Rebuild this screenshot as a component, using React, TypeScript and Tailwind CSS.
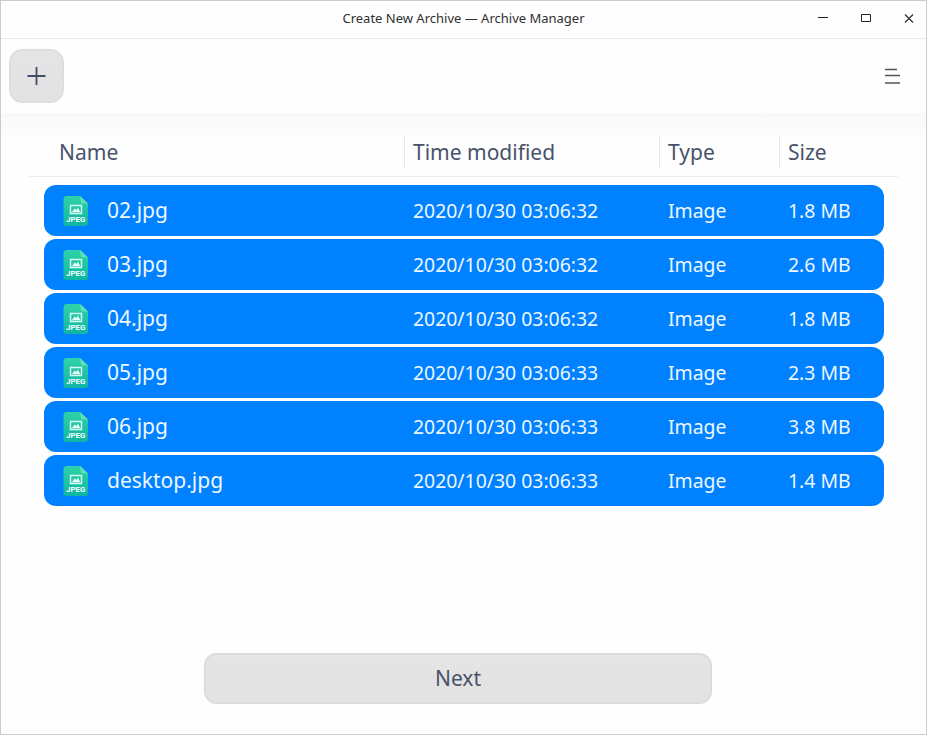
const files = [
  { name: "02.jpg", time: "2020/10/30 03:06:32", type: "Image", size: "1.8 MB" },
  { name: "03.jpg", time: "2020/10/30 03:06:32", type: "Image", size: "2.6 MB" },
  { name: "04.jpg", time: "2020/10/30 03:06:32", type: "Image", size: "1.8 MB" },
  { name: "05.jpg", time: "2020/10/30 03:06:33", type: "Image", size: "2.3 MB" },
  { name: "06.jpg", time: "2020/10/30 03:06:33", type: "Image", size: "3.8 MB" },
  { name: "desktop.jpg", time: "2020/10/30 03:06:33", type: "Image", size: "1.4 MB" },
];

function JpegIcon() {
  return (
    <svg width="26" height="32" viewBox="0 0 26 32" className="shrink-0">
      <defs>
        <linearGradient id="sheet" x1="0" y1="0" x2="0" y2="1">
          <stop offset="0" stopColor="#2fd3a8" />
          <stop offset="1" stopColor="#0fb5a3" />
        </linearGradient>
      </defs>
      <path d="M4 1H17l8 7.500V28a3 3 0 0 1-3 3H3.500a3 3 0 0 1-3-3V4.500A3.500 3.500 0 0 1 4 1z" fill="url(#sheet)" />
      <path d="M17 1l8 7.500H20a2 2 0 0 1-2-1.500z" fill="#62e0b4" />
      <rect x="7.500" y="10.500" width="11" height="8" fill="none" stroke="#d8fbf0" strokeWidth="1.500" />
      <path d="M8.800 17.300l2.800-3.900 1.900 1.700 1.300-2.700 2.600 4.900z" fill="#e6fff8" />
      <text x="12.700" y="27" textAnchor="middle" textLength="19.500" lengthAdjust="spacingAndGlyphs" fontSize="7.800" fontWeight="700" fill="#f2fffc" fontFamily="Roboto, sans-serif">JPEG</text>
    </svg>
  );
}

const columns = "grid-cols-[360px_255px_120px_1fr]";

export default function App() {
  return (
    <div className="flex h-[735px] w-[927px] flex-col border border-[#cbcbcf] bg-[#fefefe] font-['Noto_Sans',sans-serif] text-[#48526a]">
      <header className="grid h-[38px] shrink-0 grid-cols-[1fr_auto_1fr] items-center border-b border-[#e8e8e8]">
        <span />
        <h1 className="pb-[4px] text-[13px] leading-5 text-[#303030]">Create New Archive — Archive Manager</h1>
        <svg width="110" height="37" viewBox="0 0 110 37" className="justify-self-end" fill="none" stroke="#222">
          <path d="M2 16.500h10M45.500 13.500h9v7h-9z" />
          <path d="M89 13.500l8 8M97 13.500l-8 8" stroke="#333" strokeWidth="1.250" />
        </svg>
      </header>

      <div className="flex h-[74px] shrink-0 items-center justify-between pr-[25px] pl-2">
        <button aria-label="Add files" className="mb-px flex h-[54px] w-[55px] items-center justify-center rounded-[13px] border border-[#dcdcdc] bg-linear-to-b from-[#e5e5e5] to-[#e2e2e2] shadow-[inset_0_0_0_1px_#dfdfdf]">
          <svg width="19" height="20" viewBox="0 0 19 20" stroke="#414d68" strokeWidth="1.800">
            <path d="M0.500 10h18M9.500 1v18" />
          </svg>
        </button>
        <svg width="17" height="17" viewBox="0 0 17 17" stroke="#50555e" strokeWidth="1.400">
          <path d="M1 1.500h12M1 7.500h15M1 15h15" />
        </svg>
      </div>

      <main className="flex flex-1 flex-col bg-[linear-gradient(to_bottom,#f8f8f8,#fefefe_26px)] px-[28px]">
        <div className={"grid h-[64px] shrink-0 border-b border-[#ebebeb] pt-[22px] text-[21px] leading-[34px] " + columns}>
          <span className="pl-[30px]">Name</span>
          <span className="ml-[15px] h-[34px] border-l border-[#e6e6e6] pl-2">Time modified</span>
          <span className="ml-[15px] h-[34px] border-l border-[#e6e6e6] pl-2">Type</span>
          <span className="ml-[15px] h-[34px] border-l border-[#e6e6e6] pl-2">Size</span>
        </div>

        <div className="mt-[8px] mr-[14px] ml-[15px] flex flex-col gap-[3px]">
          {files.map((file) => (
            <div key={file.name} className="grid h-[51px] grid-cols-[369px_255px_120px_1fr] items-center rounded-[12px] bg-[#0081ff] text-[19.4px] leading-[29px] text-[#edf7ff]">
              <div className="flex items-center gap-[18px] pl-[19px]">
                <JpegIcon />
                <span className="pb-px text-[21px] leading-[30px]">{file.name}</span>
              </div>
              <span>{file.time}</span>
              <span>{file.type}</span>
              <span>{file.size}</span>
            </div>
          ))}
        </div>

        <button className="mt-auto mb-[30px] ml-[175px] h-[51px] w-[508px] rounded-[12px] border border-[#dadada] bg-linear-to-b from-[#e5e5e5] to-[#e2e2e2] pb-px text-[21px] leading-[30px] shadow-[inset_0_0_0_1px_#dedede]">
          Next
        </button>
      </main>
    </div>
  );
}
